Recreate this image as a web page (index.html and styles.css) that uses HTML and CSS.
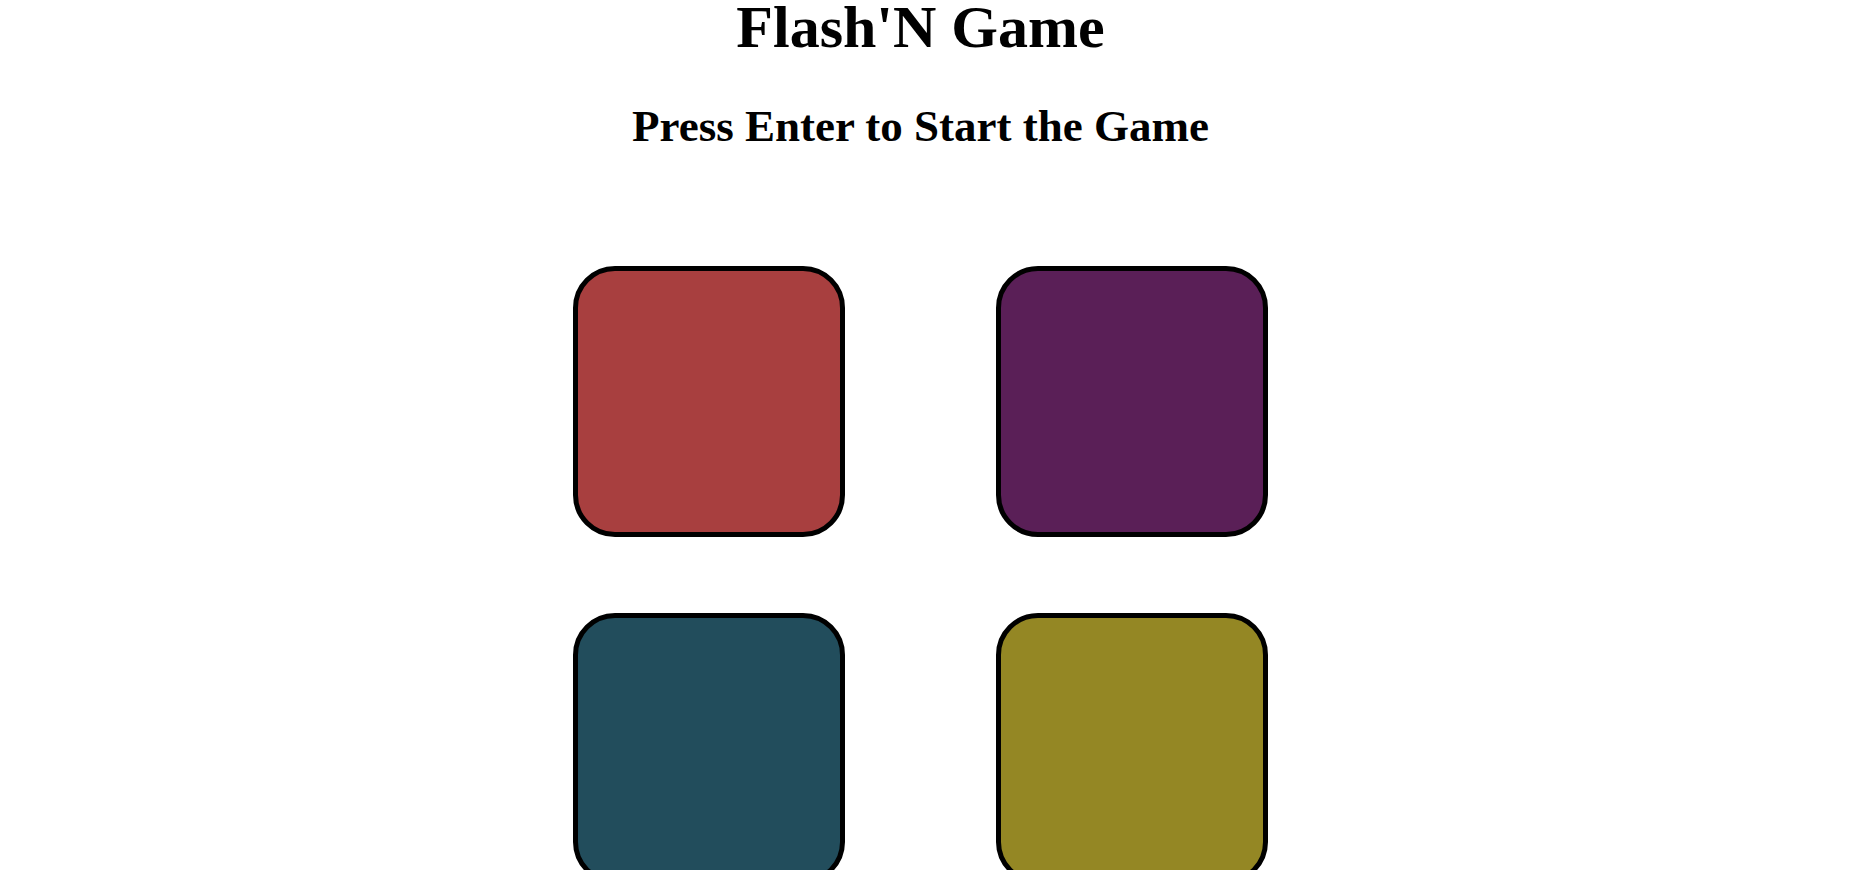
FILE: index.html
```html
<!DOCTYPE html>
<html lang="en">
<head>
<meta charset="utf-8">
<title>Flash'N Game</title>
<link rel="stylesheet" href="styles.css">
</head>
<body>
  <h1 class="title">Flash'N Game</h1>
  <h2 class="subtitle">Press Enter to Start the Game</h2>
  <div class="board">
    <div class="pad pad-red"></div>
    <div class="pad pad-purple"></div>
    <div class="pad pad-teal"></div>
    <div class="pad pad-olive"></div>
  </div>
</body>
</html>
```
FILE: styles.css
```css
html, body {
  margin: 0;
  background: #ffffff;
}

body {
  padding-right: 8px;
  font-family: "Liberation Serif", "Times New Roman", serif;
  color: #000000;
  text-align: center;
}

.title {
  margin: 0;
  font-size: 60px;
  line-height: 54px;
  font-weight: bold;
}

.subtitle {
  margin: 45px 0 0;
  font-size: 45px;
  line-height: 54px;
  font-weight: bold;
}

.board {
  display: grid;
  grid-template-columns: 272px 272px;
  column-gap: 151px;
  row-gap: 76px;
  justify-content: center;
  margin-top: 113px;
}

.pad {
  box-sizing: border-box;
  width: 272px;
  height: 271px;
  border: 5px solid #000000;
  border-radius: 42px;
}

.pad-red { background: #a83f3f; }
.pad-purple { background: #5a1f57; }
.pad-teal { background: #224d5c; }
.pad-olive { background: #948724; }
```
